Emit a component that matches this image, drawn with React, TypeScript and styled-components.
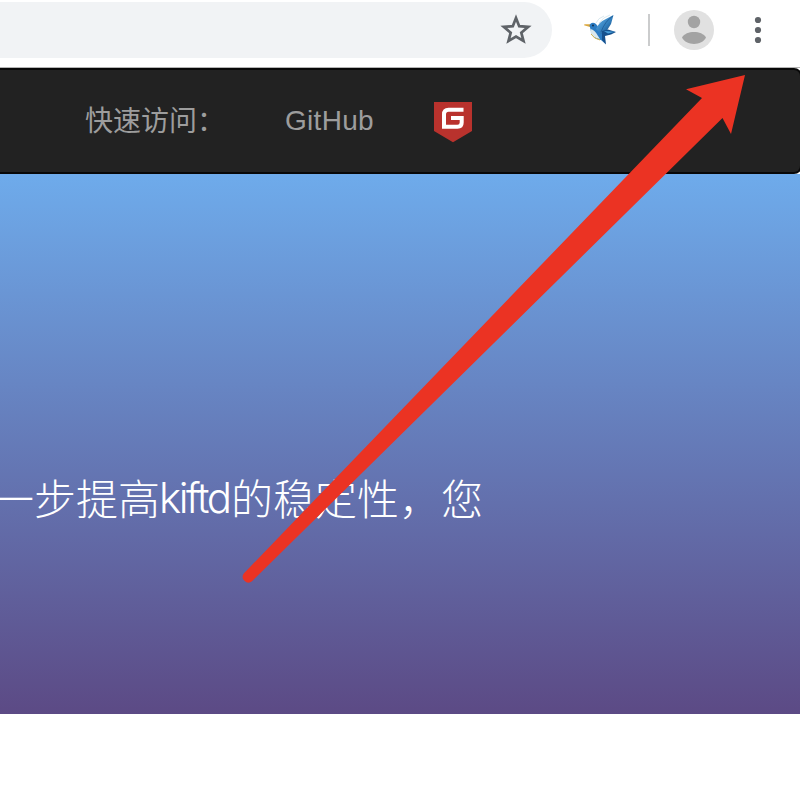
import React from "react";
import styled, { createGlobalStyle } from "styled-components";

const GlobalStyle = createGlobalStyle`
  * { box-sizing: border-box; }
  body { margin: 0; background: #fff; font-family: "Liberation Sans", "Noto Sans CJK SC", sans-serif; overflow: hidden; }
`;

const Page = styled.div`
  position: relative;
  width: 800px;
  height: 800px;
  overflow: hidden;
  background: #fff;
`;

const BrowserBar = styled.header`
  display: flex;
  height: 68px;
  padding-top: 2px;
  border-bottom: 1px solid #b4b4b4;
`;

const AddressField = styled.div`
  display: flex;
  align-items: center;
  justify-content: flex-end;
  width: 552px;
  height: 56px;
  padding-right: 20px;
  border-radius: 0 28px 28px 0;
  background: #f1f3f5;
`;

const BarTools = styled.div`
  display: flex;
  align-items: center;
  height: 56px;
  padding-left: 30px;
`;

const Divider = styled.span`
  width: 2px;
  height: 32px;
  margin: 0 24px 0 30px;
  background: #cbcccd;
`;

const Avatar = styled.svg`
  margin-right: 40px;
`;

const NavBar = styled.nav`
  display: flex;
  align-items: center;
  width: 802px;
  height: 106px;
  padding-left: 85px;
  border: 2px solid #080808;
  border-left: 0;
  border-radius: 0 8px 8px 0;
  background: #222;
  color: #9d9d9d;
  font-size: 28px;
  line-height: 40px;
`;

const NavLabel = styled.span`
  width: 200px;
  padding-bottom: 5px;
  font-family: "Noto Sans CJK SC", sans-serif;
  font-weight: 400;
`;

const NavLink = styled.a`
  width: 149px;
  letter-spacing: 0.3px;
`;

const Hero = styled.main`
  height: 540px;
  padding-top: 293px;
  background: linear-gradient(#6eabeb, #5c4a85);
`;

const Message = styled.p`
  display: flex;
  margin: 0 0 0 -8px;
  color: #fff;
  font-family: "Noto Sans CJK SC", sans-serif;
  font-weight: 300;
  font-size: 42px;
  line-height: 60px;
  white-space: nowrap;
`;

const Latin = styled.span`
  width: 72px;
  margin-left: -1px;
  padding-top: 1px;
  font-family: Inter, sans-serif;
  font-weight: 300;
  letter-spacing: -2.5px;
`;

const Pointer = styled.svg`
  position: absolute;
  inset: 0;
  pointer-events: none;
`;

const StarIcon = () => (
  <svg width="32" height="32" viewBox="0 0 32 32">
    <path d="M16 3.9 19.2 12.2 28.2 12.9 21.3 18.7 23.5 27 16 22.5 8.5 27 10.7 18.7 3.8 12.9 12.8 12.2Z" fill="none" stroke="#5f6368" strokeWidth="2.7" />
  </svg>
);

const BirdIcon = () => (
  <svg width="36" height="36" viewBox="582 12 36 36">
    <defs>
      <linearGradient id="wing" x1="0" y1="0" x2="1" y2="1">
        <stop offset="0" stopColor="#69b5ec" />
        <stop offset=".55" stopColor="#327fbd" />
        <stop offset="1" stopColor="#123d72" />
      </linearGradient>
    </defs>
    <path d="M596 23Q598 18 604 16M599 23Q603 17 610 15" fill="none" stroke="#dbe9ef" strokeWidth="1" />
    <path d="M584 25.2 584.5 24.2 592 24.3 590 27Z" fill="#dca73b" />
    <path d="M589.5 25Q592 21.3 596 24L599 28 604 33 603 37 605.5 44 601 40Q594 39 591.5 34Z" fill="#2b7bc2" />
    <path d="M590.5 29Q595 30 598 36L600 39Q593 38 590.7 33Z" fill="#dbe8ec" />
    <path d="M591 34Q594 39 600 40" fill="none" stroke="#d5b64e" strokeWidth="1" />
    <path d="M596 29Q599 22 605 19.5L613.5 15 611 24 606 32 601 34Z" fill="url(#wing)" />
    <path d="M613 16Q605 21 601 32" fill="none" stroke="#225f99" strokeWidth=".9" />
    <path d="M602 31 608 29.5 616 32 611 34.5 605 36 606 44.5 602 40Z" fill="#15508d" />
    <path d="M604 31 615 31.8 608 33.5Z" fill="#49a0db" />
    <circle cx="593" cy="25.5" r=".9" fill="#112641" />
  </svg>
);

const GiteeLogo = styled.svg`
  margin-top: 2px;
`;

const GiteeIcon = () => (
  <GiteeLogo width="38" height="41" viewBox="0 0 38 41">
    <path d="M0 0H38V29L19 40.3 0 29Z" fill="#b9322d" />
    <path d="M29.5 7.8H14.5Q10 7.8 10 12.5V24.7H23.5Q27.7 24.7 27.7 20.5V16H17" fill="none" stroke="#fff" strokeWidth="4" />
  </GiteeLogo>
);

export default function App() {
  return (
    <>
      <GlobalStyle />
      <Page>
        <BrowserBar>
          <AddressField><StarIcon /></AddressField>
          <BarTools>
            <BirdIcon />
            <Divider />
            <Avatar width="40" height="40" viewBox="0 0 40 40">
              <circle cx="20" cy="20" r="20" fill="#e1e1e1" />
              <circle cx="20" cy="12" r="6.2" fill="#a3a3a3" />
              <path d="M8 27.5C12 20.2 28 20.2 32 27.5C28 36 12 36 8 27.5Z" fill="#a3a3a3" />
            </Avatar>
            <svg width="8" height="28" viewBox="0 0 8 28" fill="#5f6368">
              <circle cx="4" cy="4" r="3.1" />
              <circle cx="4" cy="14" r="3.1" />
              <circle cx="4" cy="24" r="3.1" />
            </svg>
          </BarTools>
        </BrowserBar>
        <NavBar>
          <NavLabel>快速访问：</NavLabel>
          <NavLink>GitHub</NavLink>
          <GiteeIcon />
        </NavBar>
        <Hero>
          <Message>
            <span>一步提高</span>
            <Latin>kiftd</Latin>
            <span>的稳定性，您</span>
          </Message>
        </Hero>
        <Pointer width="800" height="800" viewBox="0 0 800 800">
          <path d="M745 75 731 134 722.5 118 252 581.3A5.7 5.7 0 0 1 244 573.3L702 98 686 89.3Z" fill="#eb3323" />
        </Pointer>
      </Page>
    </>
  );
}
